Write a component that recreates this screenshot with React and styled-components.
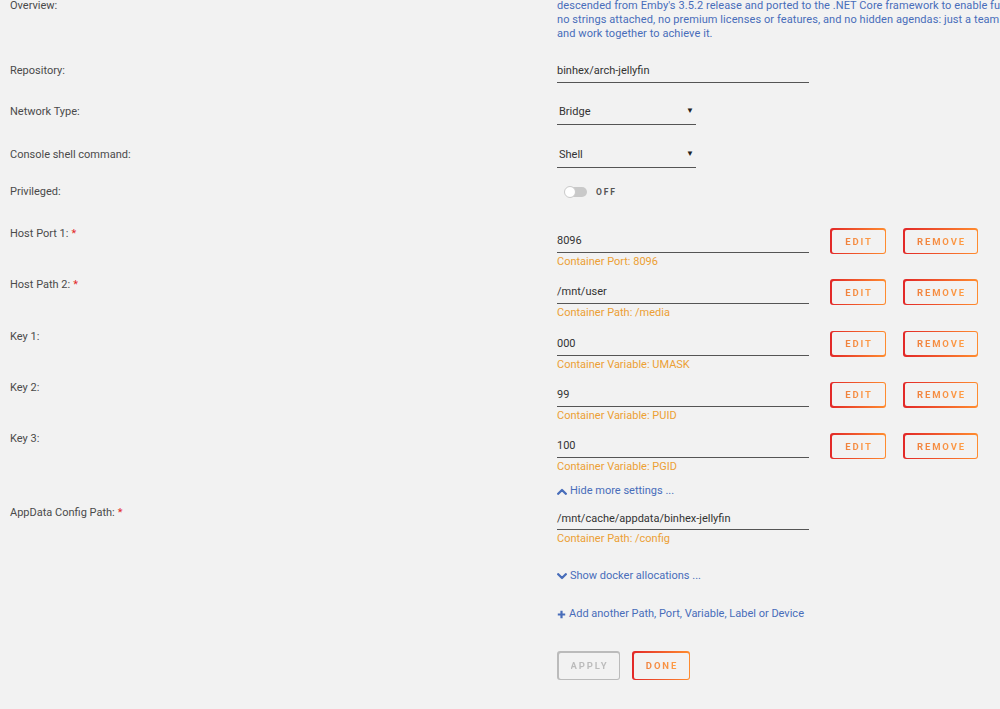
import React from "react";
import styled, { createGlobalStyle } from "styled-components";

const colors = {
  page: "#f2f2f2",
  label: "#4a4a4a",
  text: "#333333",
  blue: "#486dba",
  orange: "#eca034",
  red: "#e22828",
  amber: "#ff8c2f",
  line: "#555555",
  muted: "#bbbbbb",
};

const gradient = `linear-gradient(90deg, ${colors.red} 0%, ${colors.amber} 100%)`;
const textGradient = "linear-gradient(90deg, #f0823e 0%, #ff9d45 100%)";

const GlobalStyle = createGlobalStyle`
  html, body {
    margin: 0;
    overflow: hidden;
    background: ${colors.page};
  }
  body {
    font-family: Roboto, "Liberation Sans", Arial, sans-serif;
    font-size: 11px;
    color: ${colors.text};
  }
`;

const Page = styled.div`
  width: 1000px;
  height: 710px;
  margin-top: -1px;
  overflow: hidden;
`;

const Row = styled.div`
  display: grid;
  grid-template-columns: 557px 1fr;
  align-items: start;
  height: ${({ $h }) => $h}px;
`;

const Label = styled.div`
  padding-left: 10px;
  line-height: 14px;
  color: ${colors.label};
  white-space: nowrap;
`;

const Required = styled.span`
  color: #e22828;
  margin-left: 3px;
`;

const Content = styled.div`
  display: flex;
  align-items: flex-start;
  min-width: 0;
`;

const Overview = styled.div`
  color: ${colors.blue};
  line-height: 14px;
  letter-spacing: 0.08px;
  white-space: nowrap;
  overflow: hidden;

  span {
    display: block;
  }
`;

const Field = styled.div`
  width: 252px;
  margin-top: ${({ $top = 0 }) => $top}px;
  display: flex;
  flex-direction: column;
`;

const Input = styled.div`
  line-height: 14px;
  padding-bottom: ${({ $pad = 4 }) => $pad}px;
  border-bottom: 1px solid ${colors.line};
  color: ${colors.text};
`;

const Caption = styled.div`
  margin-top: 2px;
  line-height: 14px;
  color: ${colors.orange};
`;

const Select = styled.div`
  width: 135px;
  display: flex;
  justify-content: space-between;
  align-items: center;
  line-height: 14px;
  padding: 0 2px 5px 2px;
  border-bottom: 1px solid ${colors.line};
  color: ${colors.text};
`;

const Caret = styled.span`
  font-size: 8px;
  color: #222;
  margin-top: -2px;
`;

const Toggle = styled.div`
  display: flex;
  align-items: center;
  gap: 9px;
  margin: 2px 0 0 8px;
`;

const Track = styled.div`
  position: relative;
  width: 22px;
  height: 10px;
  border-radius: 5px;
  background: #c9c9c9;
`;

const Knob = styled.div`
  position: absolute;
  left: -1px;
  top: -1px;
  width: 10px;
  height: 10px;
  border-radius: 50%;
  background: #fff;
  border: 1px solid #c9c9c9;
`;

const ToggleText = styled.span`
  font-size: 8.5px;
  font-weight: 700;
  letter-spacing: 1.8px;
  color: #555;
`;

const Actions = styled.div`
  display: flex;
  gap: ${({ $gap = 17 }) => $gap}px;
  margin: ${({ $margin = "1px 0 0 21px" }) => $margin};
`;

const ButtonFrame = styled.div`
  width: ${({ $w }) => $w}px;
  height: ${({ $h = 26 }) => $h}px;
  box-sizing: border-box;
  padding: 1.5px;
  border-radius: 3px;
  background: ${({ $disabled }) => ($disabled ? colors.muted : gradient)};
`;

const ButtonFace = styled.button`
  width: 100%;
  height: 100%;
  border: none;
  border-radius: 2px;
  padding: 0 0 0 2px;
  background: ${colors.page};
  font-family: Roboto, "Liberation Sans", Arial, sans-serif;
  font-size: 9.5px;
  font-weight: 700;
  letter-spacing: 1.9px;
  cursor: pointer;

  span {
    background: ${({ $disabled }) => ($disabled ? colors.muted : textGradient)};
    -webkit-background-clip: text;
    -webkit-text-fill-color: transparent;
    background-clip: text;
  }
`;

const Link = styled.div`
  display: flex;
  align-items: center;
  gap: 3px;
  line-height: 14px;
  color: ${colors.blue};
  margin-top: ${({ $top = 0 }) => $top}px;

  svg {
    flex: none;
  }
`;

const Chevron = ({ up }) => (
  <svg width="10" height="7" viewBox="0 0 10 7">
    <polyline
      points={up ? "1.2,5.8 5,2 8.8,5.8" : "1.2,1.2 5,5 8.8,1.2"}
      fill="none"
      stroke={colors.blue}
      strokeWidth="2.3"
      strokeLinecap="round"
      strokeLinejoin="round"
    />
  </svg>
);

const PlusIcon = () => (
  <svg width="9" height="9" viewBox="0 0 9 9">
    <path d="M4.5 0.8v7.4M0.8 4.5h7.4" stroke={colors.blue} strokeWidth="2.2" />
  </svg>
);

const Button = ({ children, width, height, disabled }) => (
  <ButtonFrame $w={width} $h={height} $disabled={disabled}>
    <ButtonFace $disabled={disabled}>
      <span>{children}</span>
    </ButtonFace>
  </ButtonFrame>
);

const overviewLines = [
  "descended from Emby's 3.5.2 release and ported to the .NET Core framework to enable full cross-platform support. There are",
  "no strings attached, no premium licenses or features, and no hidden agendas: just a team who want to build something better",
  "and work together to achieve it.",
];

const mappings = [
  { label: "Host Port 1:", required: true, value: "8096", caption: "Container Port: 8096" },
  { label: "Host Path 2:", required: true, value: "/mnt/user", caption: "Container Path: /media" },
  { label: "Key 1:", value: "000", caption: "Container Variable: UMASK" },
  { label: "Key 2:", value: "99", caption: "Container Variable: PUID" },
  { label: "Key 3:", value: "100", caption: "Container Variable: PGID" },
];

export default function App() {
  return (
    <Page>
      <GlobalStyle />
      <Row $h={65}>
        <Label>Overview:</Label>
        <Overview>
          {overviewLines.map((line) => (
            <span key={line}>{line}</span>
          ))}
        </Overview>
      </Row>

      <Row $h={41}>
        <Label>Repository:</Label>
        <Field>
          <Input>binhex/arch-jellyfin</Input>
        </Field>
      </Row>

      <Row $h={43}>
        <Label>Network Type:</Label>
        <Select>
          Bridge <Caret>▼</Caret>
        </Select>
      </Row>

      <Row $h={37}>
        <Label>Console shell command:</Label>
        <Select>
          Shell <Caret>▼</Caret>
        </Select>
      </Row>

      <Row $h={42}>
        <Label>Privileged:</Label>
        <Toggle>
          <Track>
            <Knob />
          </Track>
          <ToggleText>OFF</ToggleText>
        </Toggle>
      </Row>

      {mappings.map((m) => (
        <Row $h={51.25} key={m.label}>
          <Label>
            {m.label}
            {m.required && <Required>*</Required>}
          </Label>
          <Content>
            <Field $top={7}>
              <Input>{m.value}</Input>
              <Caption>{m.caption}</Caption>
            </Field>
            <Actions>
              <Button width={56}>EDIT</Button>
              <Button width={75}>REMOVE</Button>
            </Actions>
          </Content>
        </Row>
      ))}

      <Row $h={22.75}>
        <div />
        <Link $top={1}>
          <Chevron up />
          Hide more settings ...
        </Link>
      </Row>

      <Row $h={63}>
        <Label>
          AppData Config Path:<Required>*</Required>
        </Label>
        <Field $top={6}>
          <Input $pad={3}>/mnt/cache/appdata/binhex-jellyfin</Input>
          <Caption>Container Path: /config</Caption>
        </Field>
      </Row>

      <Row $h={38}>
        <div />
        <Link>
          <Chevron />
          Show docker allocations ...
        </Link>
      </Row>

      <Row $h={44}>
        <div />
        <Link>
          <PlusIcon />
          Add another Path, Port, Variable, Label or Device
        </Link>
      </Row>

      <Row $h={60}>
        <div />
        <Actions $gap={12} $margin="0">
          <Button width={63} height={29} disabled>
            APPLY
          </Button>
          <Button width={58} height={29}>
            DONE
          </Button>
        </Actions>
      </Row>
    </Page>
  );
}
